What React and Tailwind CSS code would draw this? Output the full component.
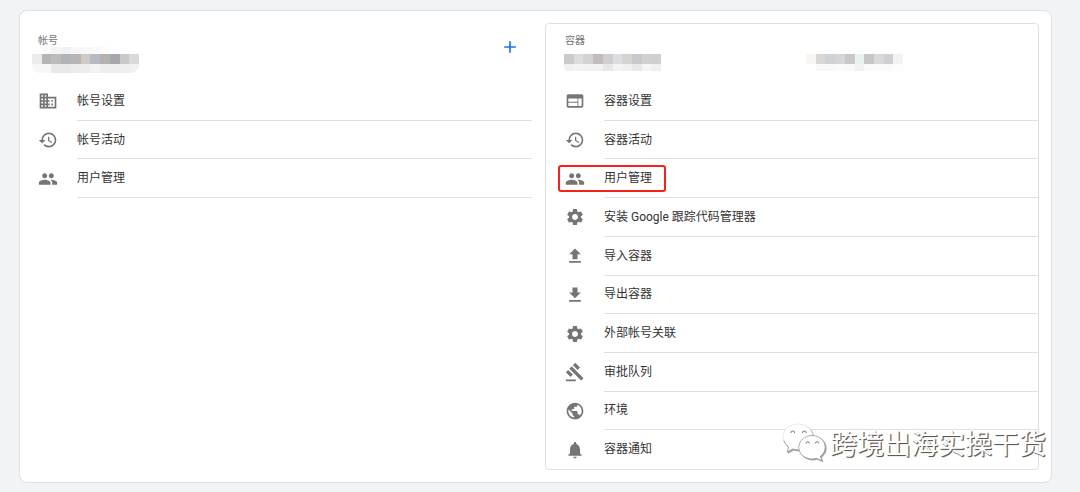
import React from 'react'
import {
  MdAdd,
  MdBusiness,
  MdFileDownload,
  MdFileUpload,
  MdGavel,
  MdHistory,
  MdNotifications,
  MdPeople,
  MdPublic,
  MdSettings,
  MdWeb,
} from 'react-icons/md'

const accountItems = [
  { icon: MdBusiness, label: '帐号设置' },
  { icon: MdHistory, label: '帐号活动' },
  { icon: MdPeople, label: '用户管理' },
]

const containerItems = [
  { icon: MdWeb, label: '容器设置' },
  { icon: MdHistory, label: '容器活动' },
  { icon: MdPeople, label: '用户管理', marked: true },
  { icon: MdSettings, label: '安装 Google 跟踪代码管理器' },
  { icon: MdFileUpload, label: '导入容器' },
  { icon: MdFileDownload, label: '导出容器' },
  { icon: MdSettings, label: '外部帐号关联' },
  { icon: MdGavel, label: '审批队列' },
  { icon: MdPublic, label: '环境' },
  { icon: MdNotifications, label: '容器通知' },
]

const accountMask = [
  ['#fdfdfd', '#fafafa', '#f4f4f4', '#f1f3f3', '#f6f7f7', '#f7f7f7', '#f9f9f9', '#fcfcfc', '#fefefe', '#ffffff', '#ffffff'],
  ['#edebe9', '#b5b4b5', '#bdbcbc', '#b0b4b9', '#b9b5b7', '#d0cac6', '#b4bbc2', '#b4b1b1', '#a4a8ad', '#cac9ca', '#d9d9da'],
  ['#f7f7f7', '#f7f7f6', '#e9e9e9', '#e8e8e8', '#ebebec', '#ededed', '#f3f4f7', '#eeeeee', '#eeeeee', '#efefef', '#f1f1f1'],
]

const containerMask = [
  ['#cccbcc', '#dddcdd', '#d3d3d5', '#c2bdbc', '#cfcdd0', '#dbdde0', '#d5d4d1', '#cac7cb', '#d1d0d3', '#cecfd1'],
  ['#f1f1f1', '#f3f3f3', '#f1f1f1', '#f1f1f1', '#e9e8e9', '#f3f3f3', '#f0f0f0', '#ebe9e8', '#f5f7f7', '#f0f0f0'],
]

const containerIdMask = [
  ['#f9f5f2', '#d9d8d7', '#ced2d7', '#d7d5d8', '#c9c7c9', '#ebf0f1', '#c8c6c8', '#dad8da', '#d0ced2', '#f0f2f4'],
  ['#ffffff', '#f8f8f8', '#f9f9f9', '#fbfbfb', '#f9f9f9', '#f1f1f1', '#fafafa', '#fbfbfb', '#fbfbfb', '#fdfdfd'],
]

function MaskRow({ colors, className }) {
  return (
    <div className={`flex ${className}`}>
      {colors.map((color, i) => (
        <span key={i} className="flex-1" style={{ backgroundColor: color }} />
      ))}
    </div>
  )
}

function ItemList({ items, className }) {
  return (
    <ul className={`grid flex-1 grid-rows-10 ${className}`}>
      {items.map(({ icon: Icon, label, marked }, i) => (
        <li key={i} className="group relative flex">
          <a href="#" className="flex flex-1 items-stretch gap-[19px]">
            <Icon className="h-5 w-5 shrink-0 self-center text-[#757575]" />
            <span className="flex flex-1 items-center border-b border-[#e0e0e0] text-[12px] leading-4 text-[#333333] group-[:nth-child(10)]:border-transparent">
              {label}
            </span>
          </a>
          {marked && (
            <span className="pointer-events-none absolute -left-[7px] top-1.5 h-[27px] w-[108px] rounded-[3px] border-2 border-[#f5221b]" />
          )}
        </li>
      ))}
    </ul>
  )
}

function AccountPanel() {
  return (
    <section className="flex flex-col border-y border-transparent">
      <header className="flex h-[58px] items-start justify-between pr-3">
        <div className="pt-[11px]">
          <h2 className="pl-1.5 text-[10px] leading-3 text-[#757575]">帐号</h2>
          <div className="w-[107px] overflow-hidden rounded-lg">
            <MaskRow colors={accountMask[0]} className="h-[7px]" />
            <MaskRow colors={accountMask[1]} className="h-[10px]" />
            <MaskRow colors={accountMask[2]} className="h-[9px]" />
          </div>
        </div>
        <button type="button" aria-label="新建" className="mt-[13px] text-[#1a73e8]">
          <MdAdd className="h-5 w-5" />
        </button>
      </header>
      <ItemList items={accountItems} className="pl-1.5" />
    </section>
  )
}

function ContainerPanel() {
  return (
    <section className="flex flex-col rounded border border-[#e0e0e0]">
      <header className="h-[58px] pl-[18px] pt-[11px]">
        <h2 className="pl-px text-[10px] leading-3 text-[#757575]">容器</h2>
        <div className="grid grid-cols-2 gap-2.5 pt-[7px]">
          <div className="w-[97px] overflow-hidden rounded-bl">
            <MaskRow colors={containerMask[0]} className="h-[10px]" />
            <MaskRow colors={containerMask[1]} className="h-[7px]" />
          </div>
          <div className="w-[97px]">
            <MaskRow colors={containerIdMask[0]} className="h-[10px]" />
            <MaskRow colors={containerIdMask[1]} className="h-[7px]" />
          </div>
        </div>
      </header>
      <ItemList items={containerItems} className="pl-[19px]" />
    </section>
  )
}

function Watermark() {
  return (
    <div className="pointer-events-none absolute bottom-[29px] right-[34px] flex items-start gap-1">
      <svg viewBox="0 0 44 38" className="h-[38px] w-11 drop-shadow-[1px_1px_0_#999999]" fill="#ffffff">
        <path
          d="M16 1C7.500 1 1 6.800 1 14c0 4.200 2.200 7.700 5.600 10L5 29l5.800-3c1.700.5 3.400.8 5.200.8 8.500 0 15-5.800 15-12.900S24.500 1 16 1z"
          stroke="#d5d5d5"
          strokeWidth=".5"
        />
        <path
          d="M30 12.500c-7.400 0-13.200 5.200-13.200 11.800S22.600 36 30 36c1.600 0 3.100-.2 4.500-.7l5.300 2.400-1.500-4.400c3-2.100 4.900-5.300 4.900-9 0-6.600-5.800-11.800-13.200-11.800z"
          stroke="#999999"
          strokeWidth=".8"
        />
        <path d="M2 17.500c.7 2.600 2.300 4.800 4.600 6.500L5 29l5.800-3c1.700.5 3.400.8 5.200.8" fill="none" stroke="#999999" strokeWidth=".8" />
        <g fill="none" stroke="#777777" strokeWidth="1">
          <path d="M8.800 10a2 2 0 0 1 4 0M20.300 10a2 2 0 0 1 4 0" />
          <path d="M24 20.500a1.700 1.700 0 0 1 3.400 0M33.300 20.500a1.700 1.700 0 0 1 3.400 0" />
        </g>
      </svg>
      <span className="whitespace-nowrap pt-1 text-[27px] leading-9 text-white [text-shadow:1px_1px_1px_#555555,1px_1px_0_#888888]">
        跨境出海实操干货
      </span>
    </div>
  )
}

export default function App() {
  return (
    <main className="relative flex min-h-screen bg-[#f1f3f4] pb-[9px] pl-[19px] pr-7 pt-2.5 font-[Roboto,'Noto_Sans_CJK_SC',sans-serif]">
      <div className="grid flex-1 grid-cols-[500fr_494fr] gap-[13px] rounded-lg border border-[#dfe1e5] bg-white p-3">
        <AccountPanel />
        <ContainerPanel />
      </div>
      <Watermark />
    </main>
  )
}
